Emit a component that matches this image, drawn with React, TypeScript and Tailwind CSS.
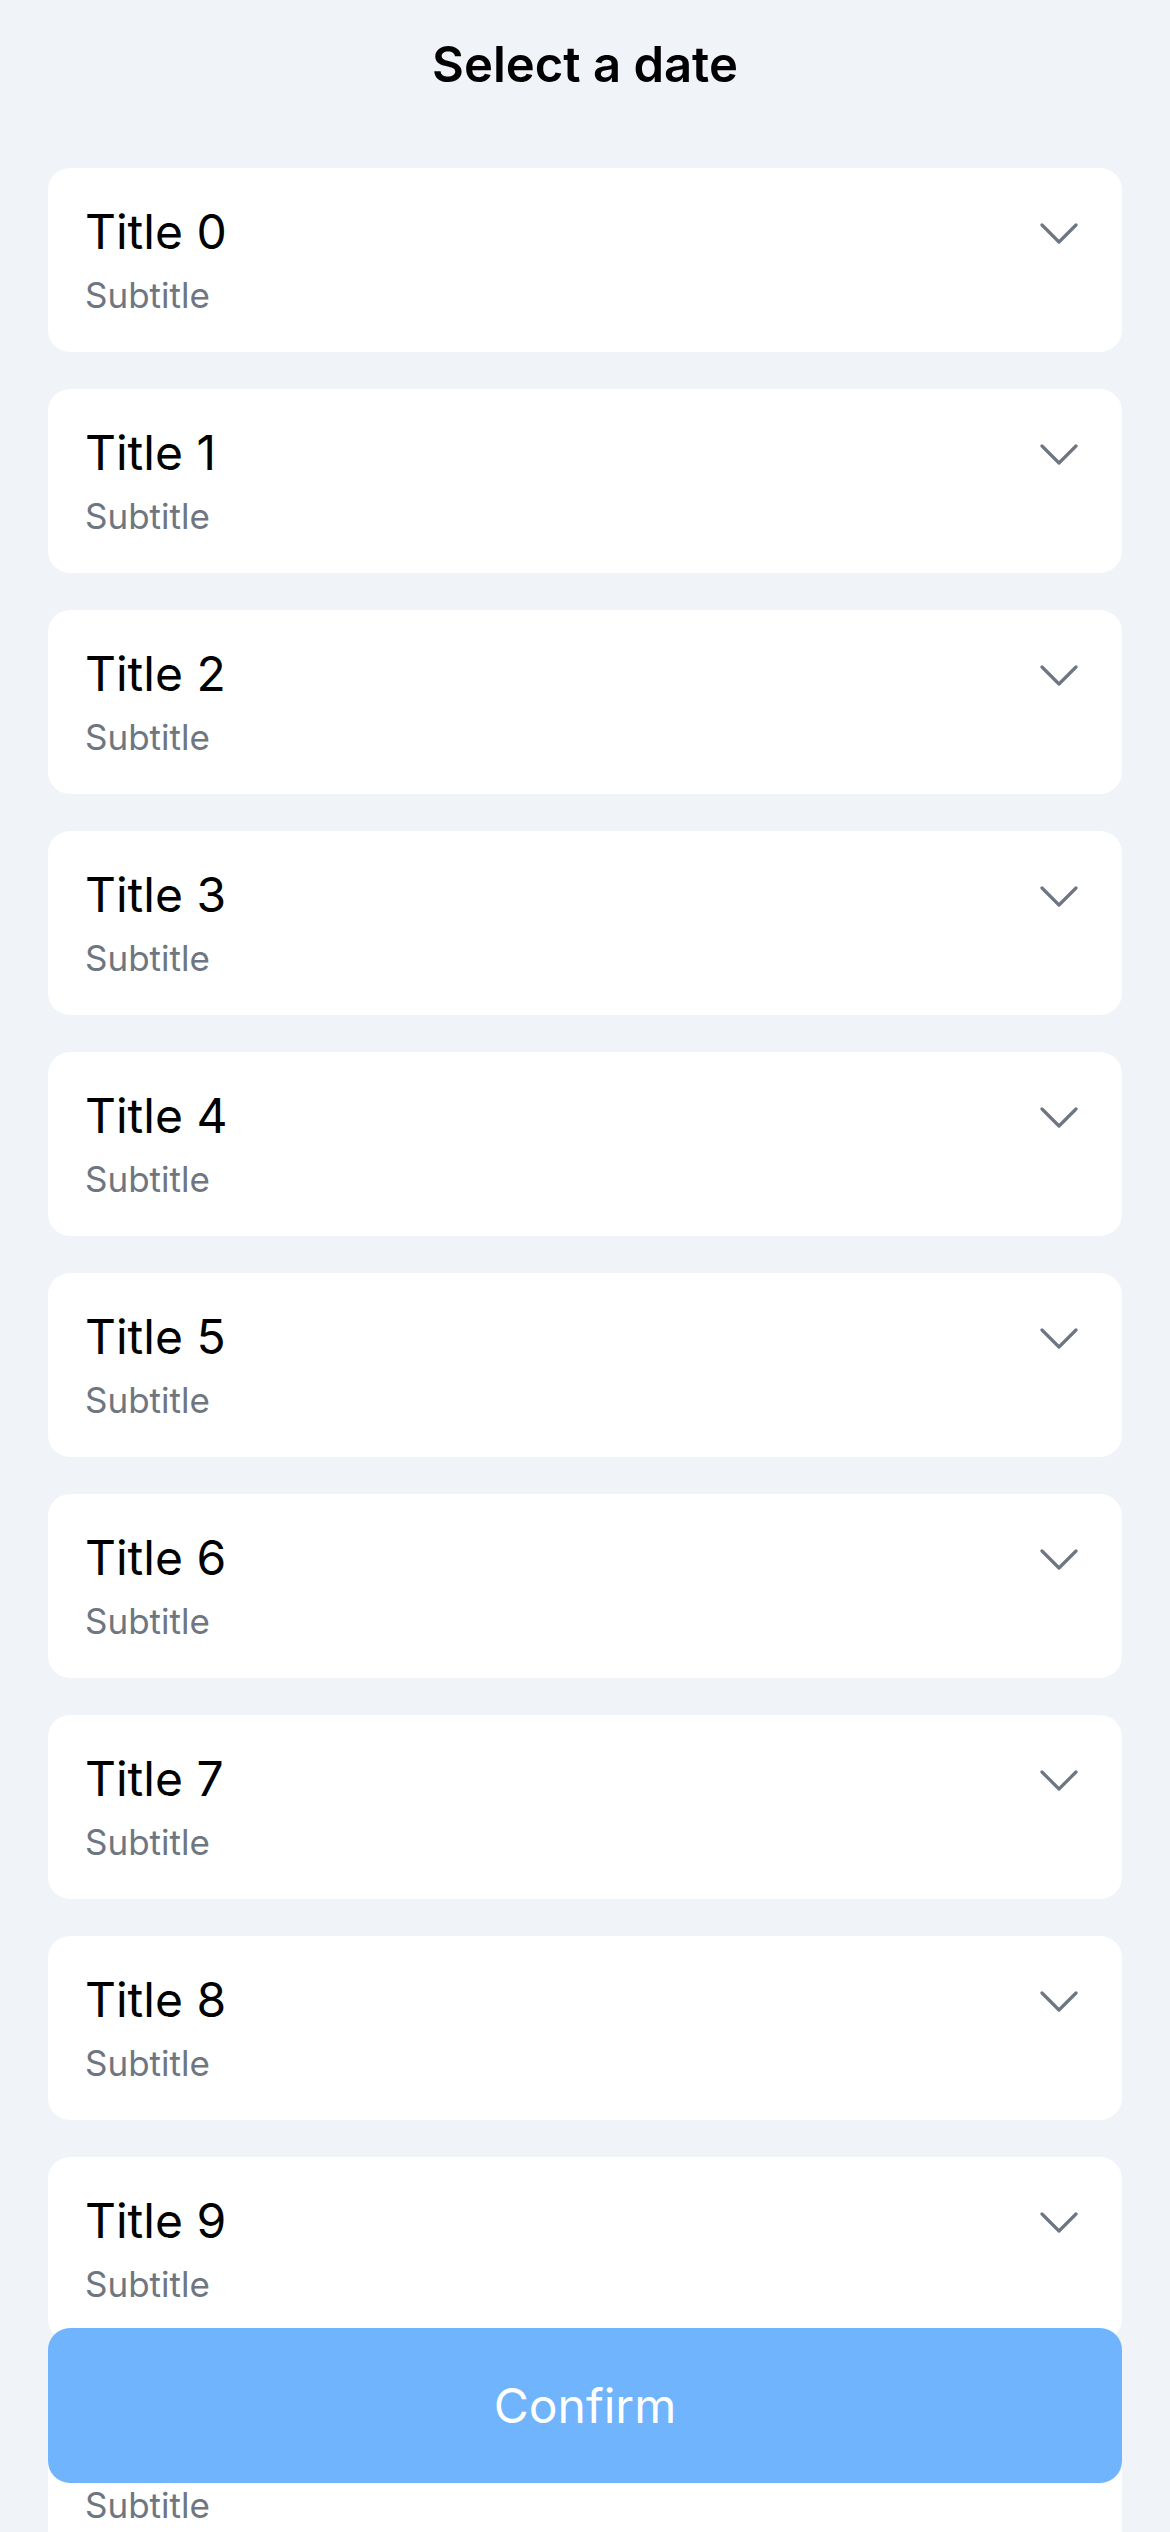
const items = Array.from({ length: 12 }, (_, i) => ({
  id: i,
  title: `Title ${i}`,
  subtitle: "Subtitle",
}));

const Chevron = () => (
  <svg
    width="38"
    height="22"
    viewBox="0 0 38 22"
    fill="none"
    className="mt-[21px] mr-[44px] shrink-0"
  >
    <path
      d="M2 2L19 19L36 2"
      stroke="#6e7681"
      strokeWidth="3.2"
      strokeLinecap="round"
      strokeLinejoin="round"
    />
  </svg>
);

export default function App() {
  return (
    <div className="min-h-screen bg-[#f0f3f8] px-12 pb-[260px] font-['Inter','Liberation_Sans',sans-serif]">
      <h1 className="pt-9 text-center text-[49px] leading-[58px] font-semibold text-black">
        Select a date
      </h1>

      <div className="mt-[74px] flex flex-col gap-[37px]">
        {items.map((item) => (
          <div
            key={item.id}
            className="flex items-start justify-between rounded-[22px] bg-white pl-[37px] pt-[34px] pb-[35px]"
          >
            <div className="flex flex-col">
              <p className="text-[48px] leading-[60px] text-black">
                {item.title}
              </p>
              <p className="mt-[11px] text-[35px] leading-[44px] text-[#6e7681]">
                {item.subtitle}
              </p>
            </div>
            <Chevron />
          </div>
        ))}
      </div>

      <button className="fixed right-12 bottom-[49px] left-12 flex h-[155px] items-center justify-center rounded-[22px] bg-[#70b4fe] text-[48px] text-white">
        Confirm
      </button>
    </div>
  );
}
